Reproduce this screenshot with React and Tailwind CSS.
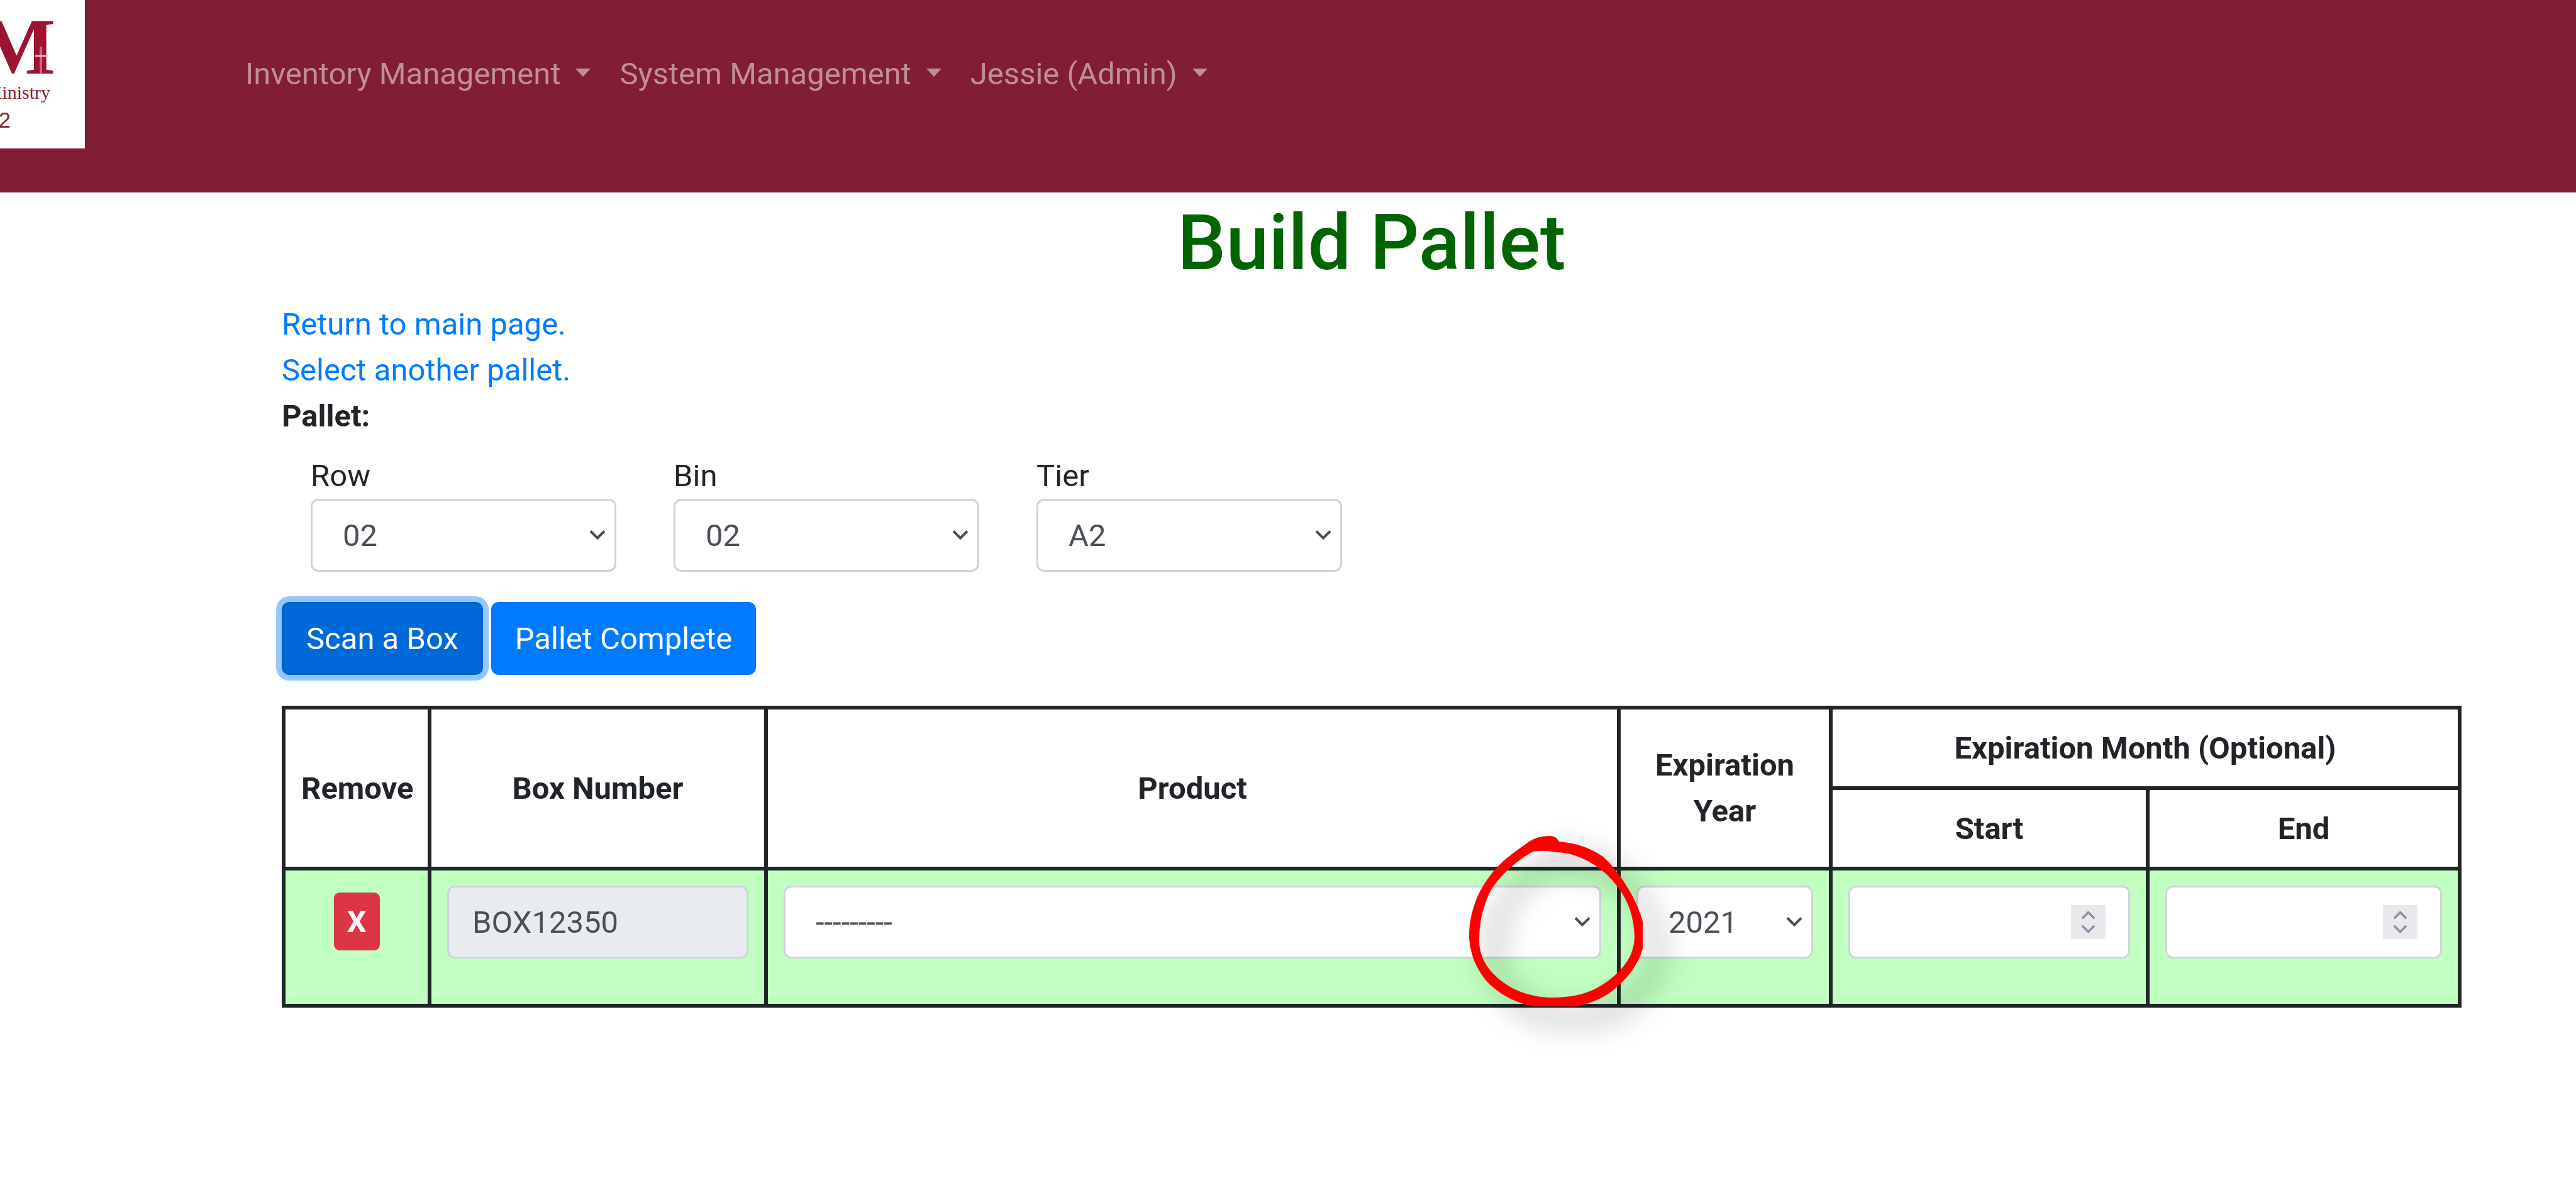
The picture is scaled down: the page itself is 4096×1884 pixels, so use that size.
import React from "react";

function Chevron({ className = "", up = false }) {
  return (
    <svg viewBox="0 0 26 17" aria-hidden="true" className={`pointer-events-none ${className}`} fill="none" stroke="currentColor" strokeWidth="4">
      <path d={up ? "M2 15 L13 4 L24 15" : "M2 2 L13 13 L24 2"} />
    </svg>
  );
}

function NavItem({ children }) {
  return (
    <button type="button" className="flex items-center gap-[24px] px-[23px] leading-[73px] text-[#c08e99]">
      {children}
      <svg viewBox="0 0 24 13" aria-hidden="true" className="mb-1 h-[13px] w-6" fill="currentColor">
        <path d="M0 0 H24 L12 13 Z" />
      </svg>
    </button>
  );
}

function Logo() {
  return (
    <div className="relative flex h-[236px] w-[135px] shrink-0 flex-col items-end overflow-hidden bg-white text-[#8f1a34]">
      <span className="mt-[20px] pr-[47px] font-['Liberation_Serif',serif] text-[128px] leading-[108px] font-bold text-[#9c1432]">M</span>
      <span className="pr-[55px] font-['Liberation_Serif',serif] text-[30px] leading-[38px]">Ministry</span>
      <span className="mt-[6px] pr-[118px] font-['Liberation_Sans',sans-serif] text-[35px] leading-[38px] text-[#7a2a3c]">2</span>
      <svg viewBox="0 0 20 44" aria-hidden="true" className="absolute top-[74px] left-[56px] h-[44px] w-[20px]" stroke="#e08a9c" fill="none">
        <path d="M9 0 V44" strokeWidth="4" opacity=".7" />
        <path d="M0 15 H20" strokeWidth="3" stroke="#f0b4bf" />
      </svg>
    </div>
  );
}

const control =
  "block h-[116px] w-full appearance-none rounded-[12px] border-[3px] border-[#ced4da] bg-white text-[#495057]";

function Select({ id, label, value, children }) {
  return (
    <div className="relative">
      <select id={id} aria-label={label} defaultValue={value} className={`${control} pr-[60px] pl-[48px]`}>
        <option>{value}</option>
      </select>
      <Chevron className="absolute top-1/2 right-[17px] h-[17px] w-[26px] -translate-y-1/2 text-[#495057]" />
      {children}
    </div>
  );
}

function MonthInput({ label }) {
  return (
    <div className="relative">
      <input type="number" min="1" max="12" aria-label={label} className={`${control} [appearance:textfield] px-[37px]`} />
      <span className="pointer-events-none absolute top-1/2 right-[39px] flex h-[54px] w-[55px] -translate-y-1/2 flex-col items-center justify-between bg-[#e9e9ed] py-[8px] text-[#8f8f9d]">
        <Chevron up className="h-[15px] w-[23px]" />
        <Chevron className="h-[15px] w-[23px]" />
      </span>
    </div>
  );
}

function HandDrawnCircle() {
  return (
    <svg
      viewBox="2330 1320 280 280"
      aria-hidden="true"
      className="pointer-events-none absolute top-[-87px] right-[-66px] z-10 h-[280px] w-[280px] overflow-visible drop-shadow-[30px_25px_24px_rgba(0,0,0,0.35)]"
      fill="#ff0000"
      fillRule="evenodd"
    >
      <path
        d="M2461 1328 Q2471 1328 2474 1333 L2477 1337 C2501 1339 2526 1346 2547 1361 C2576 1388 2602 1432 2610 1464 L2610 1507
        C2604 1530 2588 1552 2570 1567 C2553 1584 2530 1594 2503 1599 L2438 1599 C2412 1595 2388 1583 2370 1567 C2349 1548 2335 1518 2334 1488
        C2334 1455 2345 1420 2366 1393 C2384 1368 2407 1353 2428 1338 Q2442 1328 2461 1328 Z
        M2435 1353 C2408 1368 2385 1390 2370 1412 C2358 1433 2350 1462 2350 1494 C2350 1522 2365 1545 2393 1564 C2410 1576 2438 1585 2466 1585
        C2495 1585 2515 1580 2533 1572 C2560 1558 2597 1530 2597 1488 C2596 1458 2588 1432 2570 1409 C2555 1388 2532 1370 2507 1361
        Q2490 1354 2472 1354 Q2453 1350 2435 1353 Z"
      />
    </svg>
  );
}

const cell = "border-[6px] border-[#212529] px-[25px]";

export default function App() {
  return (
    <div className="min-h-screen bg-white font-[Roboto,sans-serif] text-[49px] leading-[73px] text-[#212529]">
      <header className="bg-[#811d34] pb-[70px]">
        <div className="flex items-center">
          <Logo />
          <nav className="ml-[232px] flex pb-[2px]">
            <NavItem>Inventory Management</NavItem>
            <NavItem>System Management</NavItem>
            <NavItem>Jessie (Admin)</NavItem>
          </nav>
        </div>
      </header>

      <main className="pt-[8px] pr-[182px] pl-[448px]">
        <h1 className="mb-[19px] text-center text-[122px] leading-[146px] font-medium text-[#006400]">Build Pallet</h1>
        <div className="flex flex-col items-start">
          <a href="#main" className="text-[#007bff]">Return to main page.</a>
          <a href="#pallets" className="text-[#007bff]">Select another pallet.</a>
          <strong className="font-bold">Pallet:</strong>
        </div>

        <form className="mt-[22px] ml-[46px] flex gap-[91px]">
          {[
            ["Row", "02"],
            ["Bin", "02"],
            ["Tier", "A2"],
          ].map(([name, value]) => (
            <div key={name} className="w-[486px]">
              <label htmlFor={name} className="block">{name}</label>
              <Select id={name} label={name} value={value} />
            </div>
          ))}
        </form>

        <div className="mt-[48px] flex gap-[13px]">
          <button type="button" className="h-[116px] rounded-[12px] border-[3px] border-[#0062cc] bg-[#0069d9] px-[36px] text-white shadow-[0_0_0_9px_#93c7ff]">
            Scan a Box
          </button>
          <button type="button" className="relative h-[116px] rounded-[12px] bg-[#007bff] px-[38px] text-white">
            Pallet Complete
          </button>
        </div>

        <table className="mt-[49px] w-full table-fixed border-collapse">
          <colgroup>
            <col className="w-[232px]" />
            <col className="w-[535px]" />
            <col />
            <col className="w-[337px]" />
            <col className="w-[504px]" />
            <col className="w-[496px]" />
          </colgroup>
          <thead className="font-bold">
            <tr className="h-[128px]">
              <th rowSpan={2} className={cell}>Remove</th>
              <th rowSpan={2} className={cell}>Box Number</th>
              <th rowSpan={2} className={cell}>Product</th>
              <th rowSpan={2} className={cell}>Expiration Year</th>
              <th colSpan={2} className={cell}>Expiration Month (Optional)</th>
            </tr>
            <tr className="h-[128px]">
              <th className={cell}>Start</th>
              <th className={cell}>End</th>
            </tr>
          </thead>
          <tbody>
            <tr className="h-[218px] bg-[#c1ffc1] align-top">
              <td className={`${cell} pt-[35px] text-center`}>
                <button type="button" aria-label="Remove box" className="mx-auto block h-[92px] w-[73px] rounded-[9px] bg-[#dc3545] font-bold text-white">X</button>
              </td>
              <td className={`${cell} pt-[24px]`}>
                <input type="text" readOnly aria-label="Box number" defaultValue="BOX12350" className="block h-[116px] w-full rounded-[12px] border-[3px] border-[#ced4da] bg-[#e9ecef] px-[37px] text-[#495057]" />
              </td>
              <td className={`${cell} pt-[24px]`}>
                <Select id="product" label="Product" value="---------">
                  <HandDrawnCircle />
                </Select>
              </td>
              <td className={`${cell} pt-[24px]`}>
                <Select id="year" label="Expiration year" value="2021" />
              </td>
              <td className={`${cell} pt-[24px]`}>
                <MonthInput label="Start month" />
              </td>
              <td className={`${cell} pt-[24px]`}>
                <MonthInput label="End month" />
              </td>
            </tr>
          </tbody>
        </table>
      </main>
    </div>
  );
}
